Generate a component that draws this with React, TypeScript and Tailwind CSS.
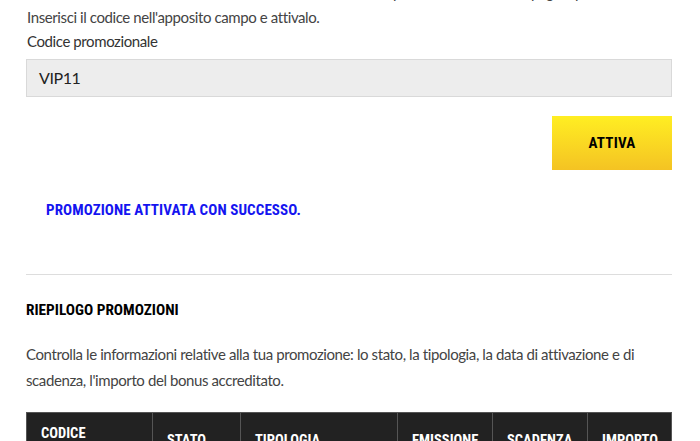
import React from "react";

const cond = { fontFamily: '"Roboto Condensed", "Liberation Sans Narrow", Roboto, sans-serif' };

export default function App() {
  return (
    <div className="w-[700px] h-[441px] overflow-hidden bg-white" style={{ fontFamily: 'Lato, "Noto Sans", sans-serif' }}>
      <div className="pl-[26px] pr-[28px] tracking-[-0.4px]">
        <p className="mt-[-19px] text-[15px] leading-[22px] text-[#444] whitespace-nowrap pl-[250px]">
          ricevuto un codice puoi trovarlo nella tua pagina personale.
        </p>
        <p className="mt-[3px] text-[15px] leading-[22px] text-[#444] pl-[1px]">
          Inserisci il codice nell'apposito campo e attivalo.
        </p>
        <p className="mt-[2px] text-[15px] leading-[22px] text-[#333] pl-[1px]">Codice promozionale</p>
        <div className="mt-[7px] h-[38px] border border-[#d9d9d9] bg-[#ededed] flex items-center pl-[12px] text-[16px] text-[#222]">
          VIP11
        </div>
        <div className="flex justify-end mt-[19px]">
          <button
            className="w-[120px] h-[54px] bg-gradient-to-b from-[#ffee22] to-[#f4c323] text-[15px] font-bold text-black tracking-[0.2px]"
            style={cond}
          >
            ATTIVA
          </button>
        </div>
        <p className="mt-[31px] pl-[20px] text-[15px] font-bold text-[#1414f0] leading-[18px] tracking-[0.1px]" style={cond}>
          PROMOZIONE ATTIVATA CON SUCCESSO.
        </p>
        <div className="mt-[55px] border-t border-[#dddddd]" />
        <h2 className="mt-[25px] text-[15.3px] font-bold text-black leading-[20px] tracking-normal" style={cond}>
          RIEPILOGO PROMOZIONI
        </h2>
        <p className="mt-[21px] text-[15px] leading-[26px] text-[#444]">
          Controlla le informazioni relative alla tua promozione: lo stato, la tipologia, la data di attivazione e di scadenza, l'importo del bonus accreditato.
        </p>
        <div className="mt-[19px] bg-[#222] border border-[#555] grid grid-cols-[126px_88px_157px_95px_95px_1fr] text-white text-[14.5px] font-bold leading-[16px] tracking-normal" style={cond}>
          <div className="px-[14px] pt-[13px] h-[60px] border-r border-[#555]">CODICE<br />PROMOZIONALE</div>
          <div className="px-[14px] pt-[20px] border-r border-[#555]">STATO</div>
          <div className="px-[14px] pt-[20px] border-r border-[#555]">TIPOLOGIA</div>
          <div className="px-[14px] pt-[20px] border-r border-[#555]">EMISSIONE</div>
          <div className="px-[14px] pt-[20px] border-r border-[#555]">SCADENZA</div>
          <div className="px-[14px] pt-[20px]">IMPORTO</div>
        </div>
      </div>
    </div>
  );
}
